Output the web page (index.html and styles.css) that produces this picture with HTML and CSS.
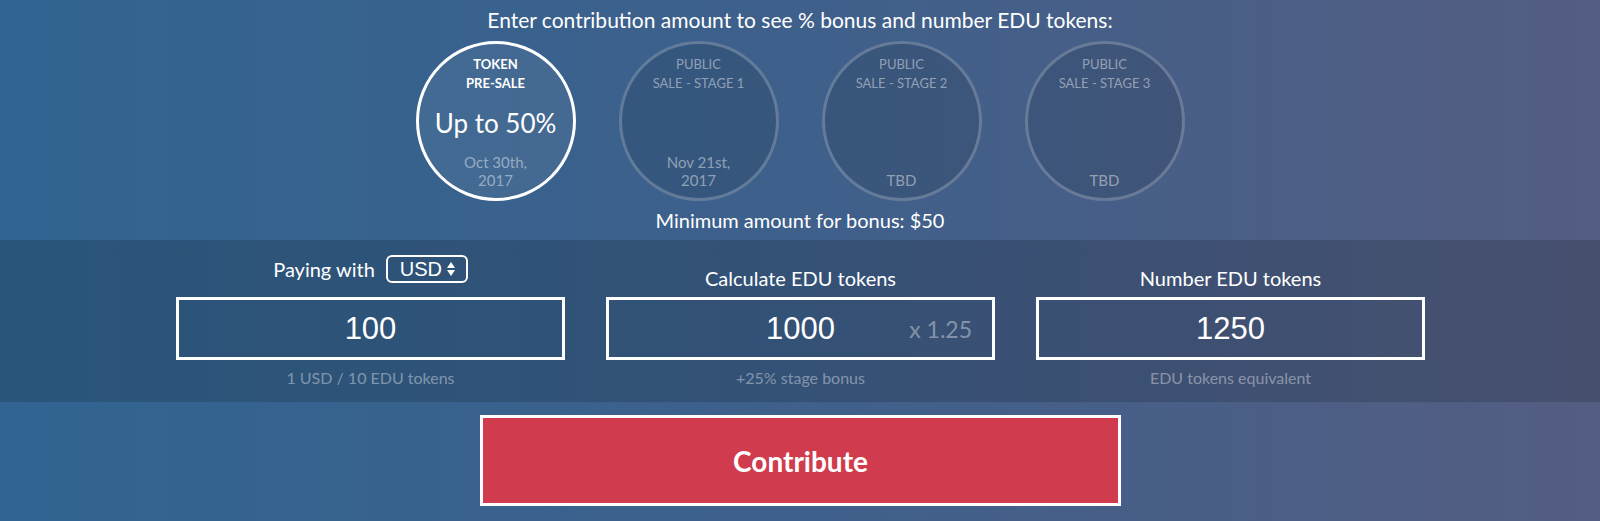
FILE: index.html
```html
<!DOCTYPE html>
<html lang="en">
<head>
<meta charset="utf-8">
<title>Contribute</title>
<link rel="stylesheet" href="styles.css">
</head>
<body>
<div class="page">
  <h2 class="title">Enter contribution amount to see % bonus and number EDU tokens:</h2>

  <div class="stages">
    <div class="stage active">
      <div class="stage-name">TOKEN<br>PRE-SALE</div>
      <div class="stage-bonus">Up to 50%</div>
      <div class="stage-date">Oct 30th,<br>2017</div>
    </div>
    <div class="stage">
      <div class="stage-name">PUBLIC<br>SALE - STAGE 1</div>
      <div class="stage-bonus"></div>
      <div class="stage-date">Nov 21st,<br>2017</div>
    </div>
    <div class="stage">
      <div class="stage-name">PUBLIC<br>SALE - STAGE 2</div>
      <div class="stage-bonus"></div>
      <div class="stage-date">TBD</div>
    </div>
    <div class="stage">
      <div class="stage-name">PUBLIC<br>SALE - STAGE 3</div>
      <div class="stage-bonus"></div>
      <div class="stage-date">TBD</div>
    </div>
  </div>

  <p class="minimum">Minimum amount for bonus: $50</p>

  <div class="band">
    <div class="calc">
      <div class="col">
        <div class="col-label">
          <div class="paying">
            <span>Paying with</span>
            <span class="select">USD<svg class="arrows" width="10" height="16" viewBox="0 0 10 16"><polygon points="1,7 5,1 9,7" fill="#fff"/><polygon points="1,9 5,15 9,9" fill="#fff"/></svg></span>
          </div>
        </div>
        <div class="field">100</div>
        <div class="caption">1 USD / 10 EDU tokens</div>
      </div>
      <div class="col">
        <div class="col-label"><span>Calculate EDU tokens</span></div>
        <div class="field">1000<span class="mult">x 1.25</span></div>
        <div class="caption">+25% stage bonus</div>
      </div>
      <div class="col">
        <div class="col-label"><span>Number EDU tokens</span></div>
        <div class="field">1250</div>
        <div class="caption">EDU tokens equivalent</div>
      </div>
    </div>
  </div>

  <div class="actions">
    <button class="contribute">Contribute</button>
  </div>
</div>
</body>
</html>
```

FILE: styles.css
```css
html, body {
  margin: 0;
  padding: 0;
}

body {
  width: 1600px;
  height: 521px;
  overflow: hidden;
  background: linear-gradient(90deg, #316491 0%, #3e608b 50%, #545d82 100%);
  font-family: Lato, "Open Sans", sans-serif;
  color: #fff;
}

.page {
  display: flex;
  flex-direction: column;
  align-items: stretch;
}

.title {
  margin: 0;
  padding-top: 7px;
  font-size: 21px;
  line-height: 25px;
  font-weight: 400;
  text-align: center;
}

.stages {
  display: flex;
  justify-content: center;
  gap: 43px;
  margin-top: 9px;
}

.stage {
  box-sizing: border-box;
  width: 160px;
  height: 160px;
  border-radius: 50%;
  border: 3px solid rgba(255, 255, 255, 0.22);
  background: rgba(0, 0, 0, 0.1);
  display: flex;
  flex-direction: column;
  align-items: center;
  padding: 11px 0 9px;
  text-align: center;
  color: rgba(255, 255, 255, 0.45);
}

.stage.active {
  border-color: #fff;
  background: rgba(255, 255, 255, 0.05);
}

.stage-name {
  font-size: 13px;
  line-height: 19px;
  font-weight: 400;
}

.stage.active .stage-name {
  color: #fff;
  font-weight: 700;
}

.stage-bonus {
  flex: 1;
  display: flex;
  align-items: center;
  justify-content: center;
  font-size: 26px;
  line-height: 30px;
  color: #fff;
}

.stage-date {
  font-size: 15px;
  line-height: 18px;
}

.minimum {
  margin: 7px 0 0;
  font-size: 20px;
  line-height: 24px;
  text-align: center;
}

.band {
  margin-top: 8px;
  height: 162px;
  box-sizing: border-box;
  padding-top: 14px;
  background: rgba(0, 0, 0, 0.15);
}

.calc {
  display: grid;
  grid-template-columns: repeat(3, 389px);
  column-gap: 41px;
  justify-content: center;
  padding-left: 1px;
}

.col {
  display: flex;
  flex-direction: column;
  align-items: stretch;
}

.col-label {
  height: 36px;
  display: flex;
  align-items: flex-end;
  justify-content: center;
  font-size: 20px;
  line-height: 24px;
}

.paying {
  display: flex;
  align-items: center;
  gap: 11px;
  margin-bottom: 7px;
}

.select {
  box-sizing: border-box;
  height: 28px;
  width: 82px;
  border: 2px solid #fff;
  border-radius: 6px;
  display: flex;
  align-items: center;
  padding: 0 0 0 12px;
  gap: 4px;
  font-family: "Liberation Sans", Arial, sans-serif;
  font-size: 20px;
}

.arrows {
  display: block;
}

.field {
  position: relative;
  box-sizing: border-box;
  margin-top: 7px;
  height: 63px;
  border: 3px solid #fff;
  display: flex;
  align-items: center;
  justify-content: center;
  font-family: "Liberation Sans", Arial, sans-serif;
  font-size: 31px;
}

.mult {
  position: absolute;
  right: 20px;
  top: 50%;
  transform: translateY(-50%);
  font-family: Lato, sans-serif;
  font-size: 23px;
  color: rgba(255, 255, 255, 0.4);
}

.caption {
  margin-top: 8px;
  font-size: 16px;
  line-height: 20px;
  text-align: center;
  color: rgba(255, 255, 255, 0.4);
}

.actions {
  display: flex;
  justify-content: center;
  margin-top: 13px;
}

.contribute {
  box-sizing: border-box;
  width: 641px;
  height: 91px;
  margin-left: 1px;
  border: 3px solid #fff;
  background: #d03c4d;
  color: #fff;
  font-family: Lato, sans-serif;
  font-weight: 700;
  font-size: 28px;
  cursor: pointer;
}
```
